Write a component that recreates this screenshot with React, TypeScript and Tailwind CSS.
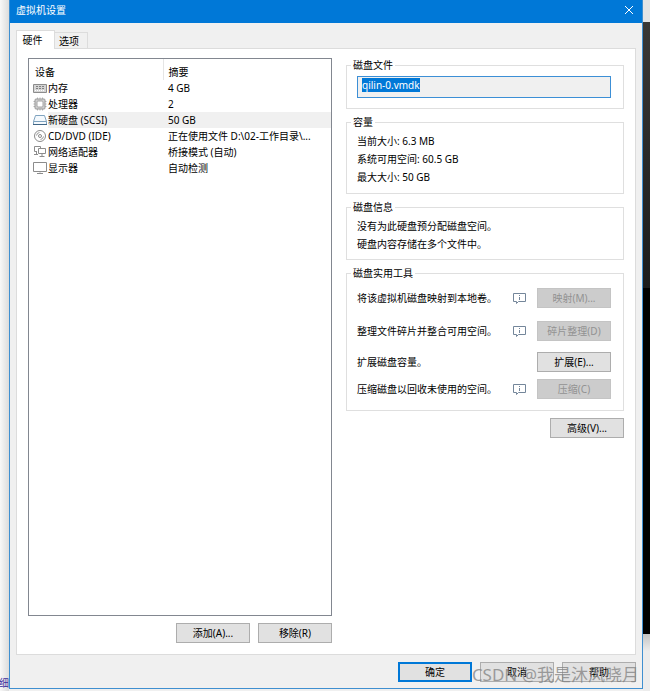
import type { ButtonHTMLAttributes, ReactNode } from 'react';
import clsx from 'clsx';

interface Device {
  name: string;
  summary: string;
  icon: ReactNode;
  selected?: boolean;
}

const iconProps = { width: 14, height: 14, viewBox: '0 0 14 14', fill: 'none', stroke: '#8c8c8c' };

const devices: Device[] = [
  {
    name: '内存',
    summary: '4 GB',
    icon: (
      <svg {...iconProps}>
        <path d="M.5 3.5h13v8H.5z" fill="#d4d4d4" />
        <path d="M3 5.500h2M6 5.500h2M9 5.500h2M3 7.500h2M6 7.500h2M9 7.500h2" stroke="#808080" />
        <path d="M2 9.500h10" stroke="#fff" strokeDasharray="1 1" />
      </svg>
    ),
  },
  {
    name: '处理器',
    summary: '2',
    icon: (
      <svg {...iconProps}>
        <path d="M4.500.5v13M7 .5v13M9.500.5v13M.5 4.500h13M.5 7h13M.5 9.500h13" stroke="#b4b4b4" />
        <rect x="2" y="2" width="10" height="10" rx="1" fill="#d0d0d0" stroke="#9a9a9a" />
        <rect x="4" y="4" width="6" height="6" rx="1" fill="#fff" stroke="#a4a4a4" />
      </svg>
    ),
  },
  {
    name: '新硬盘 (SCSI)',
    summary: '50 GB',
    selected: true,
    icon: (
      <svg {...iconProps} stroke="#7fa3bf">
        <path d="M.5 8.500l2-6h9l2 6v3H.5z" fill="#f4f9fd" />
        <path d="M.5 8.500h13" />
        <path d="M0 11.500h14" stroke="#3f6585" />
      </svg>
    ),
  },
  {
    name: 'CD/DVD (IDE)',
    summary: '正在使用文件 D:\\02-工作目录\\...',
    icon: (
      <svg {...iconProps}>
        <circle cx="7" cy="7" r="5.5" />
        <circle cx="7" cy="7" r="1.5" />
        <path d="M3.500 6.500A3.500 3.500 0 0 1 6.500 3.500M10.500 7.500A3.500 3.500 0 0 1 7.500 10.500" stroke="#999" />
      </svg>
    ),
  },
  {
    name: '网络适配器',
    summary: '桥接模式 (自动)',
    icon: (
      <svg {...iconProps}>
        <path d="M4 6.500H1.500v-5h6V3" />
        <path d="M5.500 3.500h7v5h-7zM9 8.500v3M6.500 11.500h5M3.500 6.500v3M1 9.500h4" />
      </svg>
    ),
  },
  {
    name: '显示器',
    summary: '自动检测',
    icon: (
      <svg {...iconProps}>
        <path d="M.5 1.500h13v9H.5z" />
        <path d="M7 10.500v1M4 12.500h6" />
      </svg>
    ),
  },
];

const utilities = [
  { text: '将该虚拟机磁盘映射到本地卷。', button: '映射(M)...', info: true, enabled: false, row: 'mb-[13px]' },
  { text: '整理文件碎片并整合可用空间。', button: '碎片整理(D)', info: true, enabled: false, row: 'mb-[11px]' },
  { text: '扩展磁盘容量。', button: '扩展(E)...', info: false, enabled: true, row: 'mb-[7px]' },
  { text: '压缩磁盘以回收未使用的空间。', button: '压缩(C)', info: true, enabled: false, row: '' },
];

function Button({ primary, ...props }: ButtonHTMLAttributes<HTMLButtonElement> & { primary?: boolean }) {
  return (
    <button
      type="button"
      className={clsx(
        'h-5 w-[74px] shrink-0 whitespace-nowrap text-center disabled:border disabled:border-[#c4c4c4] disabled:bg-[#cccccc] disabled:text-[#929292]',
        primary ? 'border-2 border-[#0078d7] bg-[#e1e1e1]' : 'border border-[#adadad] bg-[#e1e1e1]',
      )}
      {...props}
    />
  );
}

function Group({ title, className, children }: { title: string; className?: string; children: ReactNode }) {
  return (
    <fieldset className={clsx('min-w-0 border border-[#dfdfdf] pr-3 pl-[10px]', className)}>
      <legend className="-ml-[6px] px-[2px] leading-[14px]">{title}</legend>
      {children}
    </fieldset>
  );
}

function InfoIcon() {
  return (
    <svg width="13" height="12" viewBox="0 0 13 12" fill="none" stroke="#74869a" className="shrink-0">
      <path d="M.5 1.500h12v8H5.500l-2 2v-2H.5z" />
      <path d="M6.500 3v1M6.500 5v3" />
    </svg>
  );
}

function DeviceList() {
  return (
    <table className="w-full table-fixed border-collapse text-left">
      <thead>
        <tr className="h-[21px]">
          <th className="w-[134px] border-r border-[#e5e5e5] pt-1 pl-[6px] font-normal">设备</th>
          <th className="pt-1 pl-[5px] font-normal">摘要</th>
        </tr>
      </thead>
      <tbody>
        {devices.map((d) => (
          <tr key={d.name} className="h-4">
            <td className="p-0">
              <div className="flex h-4 items-center whitespace-nowrap pl-1">
                <span className="w-[15px] shrink-0">{d.icon}</span>
                <span className={clsx('h-4 flex-1', d.selected && 'bg-[#f0f0f0]')}>{d.name}</span>
              </div>
            </td>
            <td className={clsx('truncate p-0 pl-[5px]', d.selected && 'bg-[#f0f0f0]')}>{d.summary}</td>
          </tr>
        ))}
      </tbody>
    </table>
  );
}

export default function App() {
  return (
    <div className="grid min-h-screen grid-cols-[9px_minmax(0,1fr)_7px] overflow-hidden bg-[#f0f0f0] font-['Noto_Sans','Noto_Sans_CJK_SC',sans-serif] text-[10px] leading-4 text-black">
      <div className="flex flex-col justify-end overflow-hidden bg-gradient-to-r from-[#f8f8f8] to-[#dcdcdc]">
        <span className="self-end whitespace-nowrap text-[#3b2f9e]">详细</span>
      </div>

      <div className="mb-[2px] flex flex-col border border-t-0 border-[#3f8fd0]">
        <header className="flex h-[23px] items-center justify-between bg-[#0078d7] pr-2 pb-1 pl-[6px] text-white">
          <h1>虚拟机设置</h1>
          <button type="button" aria-label="关闭">
            <svg width="10" height="10" viewBox="0 0 10 10" stroke="#fff" fill="none">
              <path d="M1 1l8 8M9 1L1 9" />
            </svg>
          </button>
        </header>

        <main className="flex flex-1 flex-col px-[6px] pt-[7px]">
          <div role="tablist" className="flex items-end">
            <button
              type="button"
              role="tab"
              aria-selected="true"
              className="relative -mb-px h-[19px] w-[39px] border border-b-0 border-[#dcdcdc] bg-white pr-[6px]"
            >
              硬件
            </button>
            <button
              type="button"
              role="tab"
              aria-selected="false"
              className="h-4 w-[33px] border border-b-0 border-l-0 border-[#dcdcdc] pr-1"
            >
              选项
            </button>
          </div>

          <div className="flex flex-1 gap-[14px] border border-[#dcdcdc] bg-white pt-[9px] pr-[11px] pb-[11px] pl-[11px]">
            <section className="flex min-w-0 flex-[304] flex-col">
              <div className="flex-1 border border-[#828790]">
                <DeviceList />
              </div>
              <div className="mt-[7px] flex justify-end gap-2">
                <Button>添加(A)...</Button>
                <Button>移除(R)</Button>
              </div>
            </section>

            <section className="flex min-w-0 flex-[278] flex-col gap-[6px]">
              <Group title="磁盘文件" className="pt-1 pb-[10px]">
                <div className="flex h-[22px] items-start border border-[#3c8fd6] bg-[#f0f0f0] pt-px pl-1">
                  <input
                    type="text"
                    readOnly
                    aria-label="磁盘文件"
                    value="qilin-0.vmdk"
                    className="field-sizing-content h-[14px] bg-[#0078d7] text-white outline-none"
                  />
                </div>
              </Group>
              <Group title="容量" className="pt-[3px] pb-[7px] leading-[18px]">
                <p>当前大小: 6.3 MB</p>
                <p>系统可用空间: 60.5 GB</p>
                <p>最大大小: 50 GB</p>
              </Group>
              <Group title="磁盘信息" className="pt-[3px] pb-[6px] leading-[18px]">
                <p>没有为此硬盘预分配磁盘空间。</p>
                <p>硬盘内容存储在多个文件中。</p>
              </Group>
              <Group title="磁盘实用工具" className="pt-2 pb-[11px]">
                {utilities.map((u) => (
                  <div key={u.button} className={clsx('flex items-center', u.row)}>
                    <span className="min-w-[156px] whitespace-nowrap">{u.text}</span>
                    {u.info && <InfoIcon />}
                    <span className="flex-1" />
                    <Button disabled={!u.enabled}>{u.button}</Button>
                  </div>
                ))}
              </Group>
              <div className="mt-px flex justify-end">
                <Button>高级(V)...</Button>
              </div>
            </section>
          </div>
        </main>

        <footer className="relative flex justify-end gap-2 pt-[7px] pr-[6px] pb-[6px]">
          <Button primary>确定</Button>
          <Button>取消</Button>
          <Button>帮助</Button>
          <span className="pointer-events-none absolute right-[3px] bottom-px whitespace-nowrap text-[17px] leading-6 text-[#808080]/75">
            CSDN @我是沐风晓月
          </span>
        </footer>
      </div>

      <div className="flex flex-col">
        <div className="h-[22px] bg-[#e4e4e4]" />
        <div className="h-[266px] bg-gradient-to-b from-[#3a3836] to-[#1c1c1c]" />
        <div className="flex-1 bg-black" />
        <div className="h-[57px] bg-gradient-to-b from-[#c4c4c4] to-[#ececec] to-30%" />
      </div>
    </div>
  );
}
